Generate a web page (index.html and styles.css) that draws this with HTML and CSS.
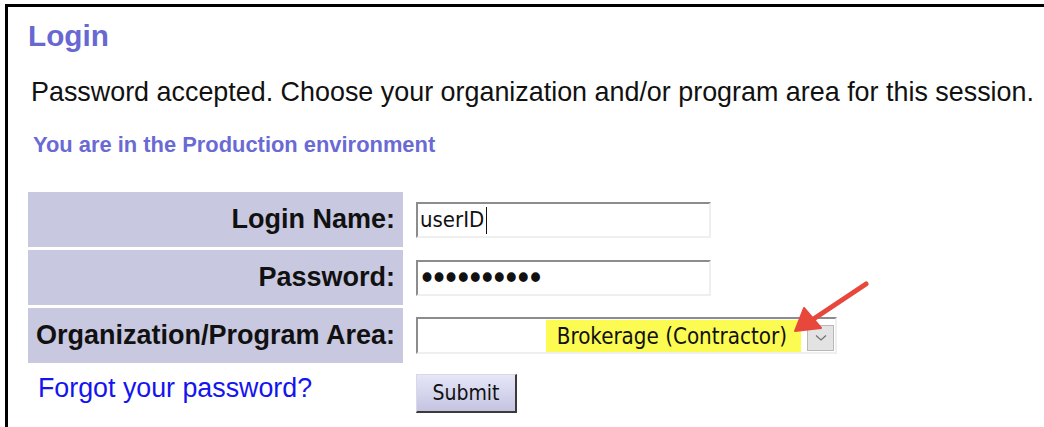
FILE: index.html
```html
<!DOCTYPE html>
<html lang="en">
<head>
<meta charset="utf-8">
<title>Login</title>
<link rel="stylesheet" href="styles.css">
</head>
<body>
<div class="frame">
  <h1 class="title">Login</h1>
  <p class="message">Password accepted. Choose your organization and/or program area for this session.</p>
  <p class="env">You are in the Production environment</p>
  <form class="login-form">
    <label class="field-label" for="login-name">Login Name:</label>
    <div class="field-cell">
      <input class="text-input" id="login-name" type="text" value="userID">
      <span class="caret"></span>
    </div>

    <label class="field-label" for="password">Password:</label>
    <div class="field-cell"><input class="text-input password" id="password" type="password" value="abcdefghij"></div>

    <label class="field-label">Organization/Program Area:</label>
    <div class="field-cell">
      <div class="select-box">
        <span class="select-value">Brokerage (Contractor)</span>
        <span class="select-button">
          <svg width="12" height="8" viewBox="0 0 12 8"><path d="M1 1.5 L6 6 L11 1.5" fill="none" stroke="#6f6f6f" stroke-width="1.2"/></svg>
        </span>
      </div>
      <svg class="callout-arrow" width="80" height="60" viewBox="0 0 80 60">
        <path d="M74 6 L20 42" stroke="#e8473b" stroke-width="5" stroke-linecap="round" fill="none"/>
        <path d="M3 53 L12 30 L29 50 Z" fill="#e8473b" stroke="#e8473b" stroke-width="2" stroke-linejoin="round"/>
      </svg>
    </div>

    <div class="link-cell"><a class="forgot" href="#">Forgot your password?</a></div>
    <div class="field-cell"><button class="submit" type="button">Submit</button></div>
  </form>
</div>
</body>
</html>
```

FILE: styles.css
```css
html, body {
  margin: 0;
  padding: 0;
  background: #ffffff;
}

body {
  font-family: "Liberation Sans", Arial, sans-serif;
  color: #111;
}

.frame {
  margin: 4px 0 0 5px;
  border-top: 3px solid #000;
  border-left: 3px solid #000;
  height: 423px;
  padding: 12px 0 0 20px;
  box-sizing: border-box;
}

.title {
  margin: 0;
  font-size: 29.7px;
  line-height: 34px;
  font-weight: bold;
  color: #6868d2;
}

.message {
  margin: 24px 0 0 3px;
  font-size: 26.9px;
  line-height: 30px;
  white-space: nowrap;
}

.env {
  margin: 26px 0 0 5px;
  font-size: 21.9px;
  line-height: 24px;
  font-weight: bold;
  color: #6a6ad4;
}

.login-form {
  margin-top: 35px;
  display: grid;
  grid-template-columns: 375px auto;
  grid-auto-rows: 55px;
  row-gap: 3px;
  column-gap: 13px;
}

.field-label {
  background: #c8c8e0;
  display: flex;
  align-items: center;
  justify-content: flex-end;
  padding-right: 8px;
  font-size: 27px;
  font-weight: bold;
  color: #111;
}

.field-cell {
  display: flex;
  align-items: center;
  position: relative;
}

.text-input {
  width: 295px;
  height: 36px;
  box-sizing: border-box;
  border-style: solid;
  border-width: 2px;
  border-color: #8c8c8c #efefef #efefef #8c8c8c;
  padding: 0 2px;
  font-family: "DejaVu Sans Condensed", Tahoma, sans-serif;
  font-size: 22px;
  color: #111;
  background: #fff;
  outline: none;
}

/* text cursor resting after the typed login name */
.caret {
  position: absolute;
  left: 70px;
  top: 15px;
  width: 1px;
  height: 27px;
  background: #111;
}

.password {
  font-size: 34px;
  letter-spacing: -6px;
  padding-left: 0;
}

.select-box {
  width: 421px;
  height: 37px;
  box-sizing: border-box;
  border-style: solid;
  border-width: 2px;
  border-color: #8c8c8c #efefef #efefef #8c8c8c;
  display: flex;
  align-items: center;
  justify-content: flex-end;
  padding-right: 1px;
  background: #fff;
}

.select-value {
  background: #fbfb52;
  height: 32px;
  display: flex;
  align-items: center;
  padding: 0 14px 0 11px;
  font-family: "DejaVu Sans Condensed", Tahoma, sans-serif;
  font-size: 22.2px;
  color: #111;
  margin-right: 6px;
}

.select-button {
  width: 27px;
  height: 26px;
  box-sizing: border-box;
  border: 1px solid #b8b8b8;
  background: #e3e3e3;
  display: flex;
  align-items: center;
  justify-content: center;
  align-self: flex-end;
  margin-bottom: 1px;
}

.callout-arrow {
  position: absolute;
  left: 376px;
  top: -30px;
}

.link-cell {
  display: flex;
  align-items: flex-start;
  padding: 7px 0 0 10px;
}

.forgot {
  font-size: 26.8px;
  line-height: 30px;
  color: #1414f0;
  text-decoration: none;
}

.submit {
  width: 101px;
  height: 39px;
  box-sizing: border-box;
  border-style: solid;
  border-width: 1px 2px 2px 1px;
  border-color: #d8d8e8 #3a3a3a #3a3a3a #d8d8e8;
  background: linear-gradient(#e6e6f8, #c4c4e2);
  font-family: "DejaVu Sans Condensed", Tahoma, sans-serif;
  font-size: 21px;
  color: #111;
  padding: 0;
}
```
